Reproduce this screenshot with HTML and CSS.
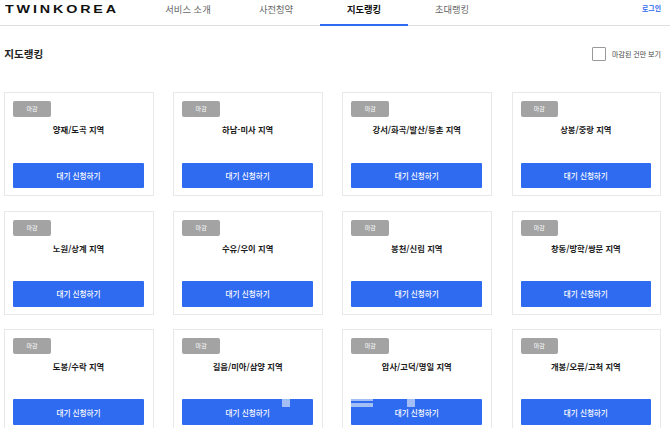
FILE: index.html
```html
<!DOCTYPE html>
<html lang="ko">
<head>
<meta charset="utf-8">
<title>지도랭킹</title>
<link rel="stylesheet" href="styles.css">
</head>
<body>
<header class="header">
  <a class="logo">TWINKOREA</a>
  <nav class="nav">
    <a class="nav-item">서비스 소개</a>
    <a class="nav-item">사전청약</a>
    <a class="nav-item active">지도랭킹</a>
    <a class="nav-item">초대랭킹</a>
  </nav>
  <a class="login">로그인</a>
</header>
<main class="main">
  <div class="title-row">
    <h1 class="title">지도랭킹</h1>
    <label class="filter"><span class="checkbox"></span>마감된 건만 보기</label>
  </div>
  <section class="grid">
    <article class="card"><span class="badge">마감</span><h2 class="name">양재/도곡 지역</h2><button class="btn">대기 신청하기</button></article>
    <article class="card"><span class="badge">마감</span><h2 class="name">하남-미사 지역</h2><button class="btn">대기 신청하기</button></article>
    <article class="card"><span class="badge">마감</span><h2 class="name">강서/화곡/발산/등촌 지역</h2><button class="btn">대기 신청하기</button></article>
    <article class="card"><span class="badge">마감</span><h2 class="name">상봉/중랑 지역</h2><button class="btn">대기 신청하기</button></article>
    <article class="card"><span class="badge">마감</span><h2 class="name">노원/상계 지역</h2><button class="btn">대기 신청하기</button></article>
    <article class="card"><span class="badge">마감</span><h2 class="name">수유/우이 지역</h2><button class="btn">대기 신청하기</button></article>
    <article class="card"><span class="badge">마감</span><h2 class="name">봉천/신림 지역</h2><button class="btn">대기 신청하기</button></article>
    <article class="card"><span class="badge">마감</span><h2 class="name">창동/방학/쌍문 지역</h2><button class="btn">대기 신청하기</button></article>
    <article class="card"><span class="badge">마감</span><h2 class="name">도봉/수락 지역</h2><button class="btn">대기 신청하기</button></article>
    <article class="card"><span class="badge">마감</span><h2 class="name">길음/미아/삼양 지역</h2><button class="btn">대기 신청하기<i class="glitch g1"></i></button></article>
    <article class="card"><span class="badge">마감</span><h2 class="name">압사/고덕/명일 지역</h2><button class="btn">대기 신청하기<i class="glitch g2"></i><i class="glitch g3"></i><i class="glitch g4"></i></button></article>
    <article class="card"><span class="badge">마감</span><h2 class="name">개봉/오류/고척 지역</h2><button class="btn">대기 신청하기</button></article>
  </section>
</main>
</body>
</html>
```
FILE: styles.css
```css
* { box-sizing: border-box; }
html, body { margin: 0; padding: 0; }
body {
  width: 670px;
  height: 428px;
  overflow: hidden;
  background: #fff;
  color: #111;
  font-family: "Noto Sans CJK KR", "Noto Sans", sans-serif;
}
.header {
  height: 26px;
  border-bottom: 1px solid #dfdfdf;
  display: flex;
  align-items: flex-start;
  padding: 0 9px 0 5px;
}
.logo {
  width: 112px;
  margin-top: 2.5px;
  font-family: "Liberation Sans", sans-serif;
  font-size: 11px;
  line-height: 13px;
  letter-spacing: 2.2px;
  color: #111;
  font-weight: 700;
  white-space: nowrap;
  transform: scaleX(1.3);
  transform-origin: left center;
}
.nav { display: flex; margin-left: 27px; }
.nav-item {
  width: 88px;
  height: 26px;
  font-size: 9.3px;
  line-height: 19px;
  color: #666;
  text-align: center;
  border-bottom: 2px solid transparent;
  white-space: nowrap;
}
.nav-item.active { color: #111; font-weight: 700; border-bottom-color: #2f6bf0; }
.login { margin-left: auto; font-size: 6.9px; font-weight: 700; color: #2f6bf0; line-height: 16px; }
.main { padding: 0 0 0 4.3px; }
.title-row {
  height: 66.3px;
  padding: 21px 9px 0 0;
  display: flex;
  justify-content: space-between;
  align-items: flex-start;
}
.title { margin: 0; font-size: 10.6px; font-weight: 700; line-height: 14px; color: #222; }
.filter { display: flex; align-items: center; gap: 6px; font-size: 7px; color: #444; line-height: 14px; }
.checkbox { width: 14px; height: 14px; border: 1px solid #999; border-radius: 1px; background: #fff; }
.grid {
  display: grid;
  grid-template-columns: repeat(4, 149.5px);
  grid-auto-rows: 104px;
  column-gap: 19.6px;
  row-gap: 14.35px;
}
.card {
  border: 1px solid #e8e8e8;
  padding: 8px 9px 7px 8px;
  display: flex;
  flex-direction: column;
  align-items: stretch;
}
.badge {
  width: 37.5px;
  height: 16px;
  border-radius: 2px;
  background: #a3a3a3;
  color: #fff;
  font-size: 6px;
  line-height: 16px;
  text-align: center;
}
.name {
  margin: 5px 0 0;
  font-size: 8.3px;
  font-weight: 700;
  line-height: 14px;
  color: #1a1a1a;
  text-align: center;
}
.btn {
  position: relative;
  margin-top: auto;
  height: 25.5px;
  border: 0;
  border-radius: 1px;
  padding: 0;
  background: #2f6bf0;
  color: #fff;
  font-family: inherit;
  font-size: 7.6px;
  font-weight: 500;
}
.glitch { position: absolute; background: #a3bdf5; }
.g1 { top: 0; left: 100px; width: 8px; height: 8px; }
.g2 { top: 0; left: 0; width: 22px; height: 2px; }
.g3 { top: 4px; left: 0; width: 22px; height: 4px; }
.g4 { top: 0; left: 56px; width: 8px; height: 8px; }
```
